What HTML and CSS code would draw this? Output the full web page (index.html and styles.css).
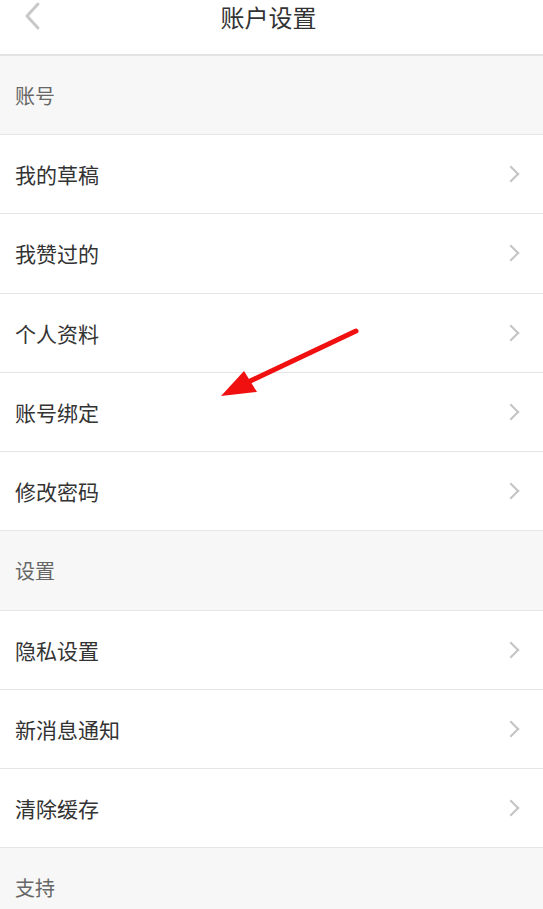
FILE: index.html
```html
<!DOCTYPE html>
<html lang="zh-CN">
<head>
    <meta charset="UTF-8">
    <meta name="viewport" content="width=device-width, initial-scale=1.0">
    <title>账户设置</title>
    <link rel="stylesheet" href="styles.css">
</head>
<body>
    <div class="page">
        <header class="topbar">
            <svg class="back" width="18" height="30" viewBox="0 0 18 30">
                <path d="M15 3 L4 15 L15 27" fill="none" stroke="#c8c8c8" stroke-width="3" stroke-linecap="round" stroke-linejoin="round"/>
            </svg>
            <h1>账户设置</h1>
        </header>

        <div class="section">账号</div>
        <div class="row"><span>我的草稿</span><i class="chev"></i></div>
        <div class="row"><span>我赞过的</span><i class="chev"></i></div>
        <div class="row"><span>个人资料</span><i class="chev"></i></div>
        <div class="row"><span>账号绑定</span><i class="chev"></i></div>
        <div class="row"><span>修改密码</span><i class="chev"></i></div>

        <div class="section">设置</div>
        <div class="row"><span>隐私设置</span><i class="chev"></i></div>
        <div class="row"><span>新消息通知</span><i class="chev"></i></div>
        <div class="row"><span>清除缓存</span><i class="chev"></i></div>

        <div class="section">支持</div>

        <!-- annotation arrow drawn over the list -->
        <svg class="arrow" width="543" height="909" viewBox="0 0 543 909">
            <line x1="356" y1="331" x2="246" y2="383" stroke="#f01010" stroke-width="5" stroke-linecap="round"/>
            <polygon points="221,396 244,371 257,392" fill="#f01010"/>
        </svg>
    </div>
</body>
</html>
```

FILE: styles.css
```css
body {
    margin: 0;
    background: #fff;
    font-family: "Noto Sans CJK SC", "Noto Sans", sans-serif;
}
.page {
    position: relative;
    width: 543px;
    height: 909px;
    overflow: hidden;
}
.topbar {
    height: 54px;
    border-bottom: 2px solid #e4e4e4;
    display: flex;
    align-items: flex-start;
    justify-content: center;
    position: relative;
}
.topbar h1 {
    margin: 2px 6px 0 0;
    font-size: 24px;
    font-weight: 400;
    color: #333;
    line-height: 30px;
}
.back {
    position: absolute;
    left: 23px;
    top: 1px;
}
.section {
    height: 78.25px;
    padding-left: 15px;
    background: #f7f7f7;
    border-bottom: 1px solid #e6e6e6;
    display: flex;
    align-items: center;
    font-size: 20px;
    color: #666;
}
.section:first-of-type {
    height: 78px;
}
.row {
    height: 78.25px;
    padding: 0 22px 0 15px;
    border-bottom: 1px solid #e6e6e6;
    display: flex;
    align-items: center;
    justify-content: space-between;
    font-size: 21px;
    color: #333;
}
.chev {
    width: 10px;
    height: 10px;
    border-top: 2px solid #c4c4c4;
    border-right: 2px solid #c4c4c4;
    transform: rotate(45deg);
    margin-right: 4px;
}
.arrow {
    position: absolute;
    left: 0;
    top: 0;
    pointer-events: none;
}
```
